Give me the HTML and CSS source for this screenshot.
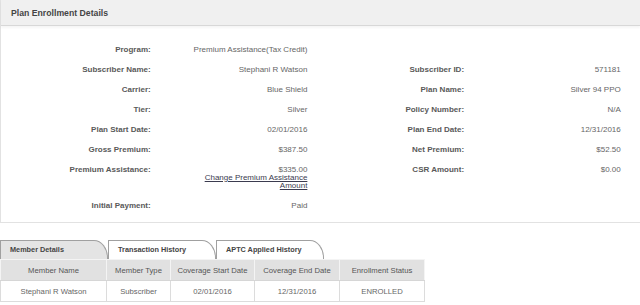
FILE: index.html
```html
<!DOCTYPE html>
<html lang="en">
<head>
  <meta charset="UTF-8">
  <meta name="viewport" content="width=device-width, initial-scale=1.0">
  <title>Plan Enrollment Details</title>
  <link rel="stylesheet" href="styles.css">
</head>
<body>
  <div class="panel">
    <div class="panel-heading">Plan Enrollment Details</div>
    <div class="details">
      <div class="label">Program:</div>
      <div class="value">Premium Assistance(Tax Credit)</div>
      <div></div>
      <div></div>

      <div class="label">Subscriber Name:</div>
      <div class="value">Stephani R Watson</div>
      <div class="label">Subscriber ID:</div>
      <div class="value">571181</div>

      <div class="label">Carrier:</div>
      <div class="value">Blue Shield</div>
      <div class="label">Plan Name:</div>
      <div class="value">Silver 94 PPO</div>

      <div class="label">Tier:</div>
      <div class="value">Silver</div>
      <div class="label">Policy Number:</div>
      <div class="value">N/A</div>

      <div class="label">Plan Start Date:</div>
      <div class="value">02/01/2016</div>
      <div class="label">Plan End Date:</div>
      <div class="value">12/31/2016</div>

      <div class="label">Gross Premium:</div>
      <div class="value">$387.50</div>
      <div class="label">Net Premium:</div>
      <div class="value">$52.50</div>

      <div class="label">Premium Assistance:</div>
      <div class="value">$335.00<br><a href="#" class="change-link">Change Premium Assistance Amount</a></div>
      <div class="label">CSR Amount:</div>
      <div class="value">$0.00</div>

      <div class="label">Initial Payment:</div>
      <div class="value">Paid</div>
      <div></div>
      <div></div>
    </div>
  </div>

  <div class="tabs">
    <div class="tab active">Member Details</div>
    <div class="tab">Transaction History</div>
    <div class="tab">APTC Applied History</div>
  </div>

  <table class="members">
    <colgroup>
      <col class="col-name">
      <col class="col-type">
      <col class="col-start">
      <col class="col-end">
      <col class="col-status">
    </colgroup>
    <thead>
      <tr>
        <th>Member Name</th>
        <th>Member Type</th>
        <th>Coverage Start Date</th>
        <th>Coverage End Date</th>
        <th>Enrollment Status</th>
      </tr>
    </thead>
    <tbody>
      <tr>
        <td>Stephani R Watson</td>
        <td>Subscriber</td>
        <td>02/01/2016</td>
        <td>12/31/2016</td>
        <td>ENROLLED</td>
      </tr>
    </tbody>
  </table>
</body>
</html>
```

FILE: styles.css
```css
body {
  font-family: "Liberation Sans", Arial, sans-serif;
  font-size: 8px;
  margin: 0;
  background: #fff;
  color: #666;
}
.panel {
  border: 1px solid #e2e2e2;
  border-top: none;
  border-right: none;
}
.panel-heading {
  background-color: #f0f0f0;
  border-bottom: 1px solid #d8d8d8;
  box-shadow: 0 2px 2px rgba(0, 0, 0, 0.04);
  color: #444;
  font-size: 8.7px;
  font-weight: bold;
  height: 25px;
  line-height: 26px;
  padding-left: 10px;
}
.details {
  display: grid;
  grid-template-columns: repeat(4, 156.7px);
  padding: 13.5px 0 6px;
  line-height: 8px;
}
.details > div {
  padding: 6px 7px 6px 0;
  text-align: right;
}
.label {
  color: #595959;
  font-weight: bold;
}
.value {
  padding-left: 30px !important;
}
.change-link {
  color: #3b3b4f;
  text-decoration: underline;
  display: inline-block;
  max-width: 110px;
}
.tabs {
  display: flex;
  margin-top: 17.5px;
}
.tab {
  box-sizing: border-box;
  width: 108px;
  height: 19px;
  border: 1px solid #a0a0a0;
  border-bottom: none;
  border-top-right-radius: 14px 18px;
  background: #fff;
  color: #444;
  font-size: 7.3px;
  font-weight: bold;
  line-height: 18px;
  padding-left: 9px;
}
.tab.active {
  background: #e4e4e4;
}
.members {
  border-collapse: collapse;
  table-layout: fixed;
  font-size: 7.7px;
}
.members th,
.members td {
  height: 20px;
  padding: 0;
  text-align: center;
}
.members th {
  background: #e1e1e1;
  color: #555;
  font-weight: normal;
  border: 1px solid #f4f4f4;
  border-bottom-color: #d6d6d6;
}
.members td {
  color: #666;
  border: 1px solid #dcdcdc;
}
.col-name { width: 106px; }
.col-type { width: 64px; }
.col-start { width: 84px; }
.col-end { width: 85px; }
.col-status { width: 85px; }
```
